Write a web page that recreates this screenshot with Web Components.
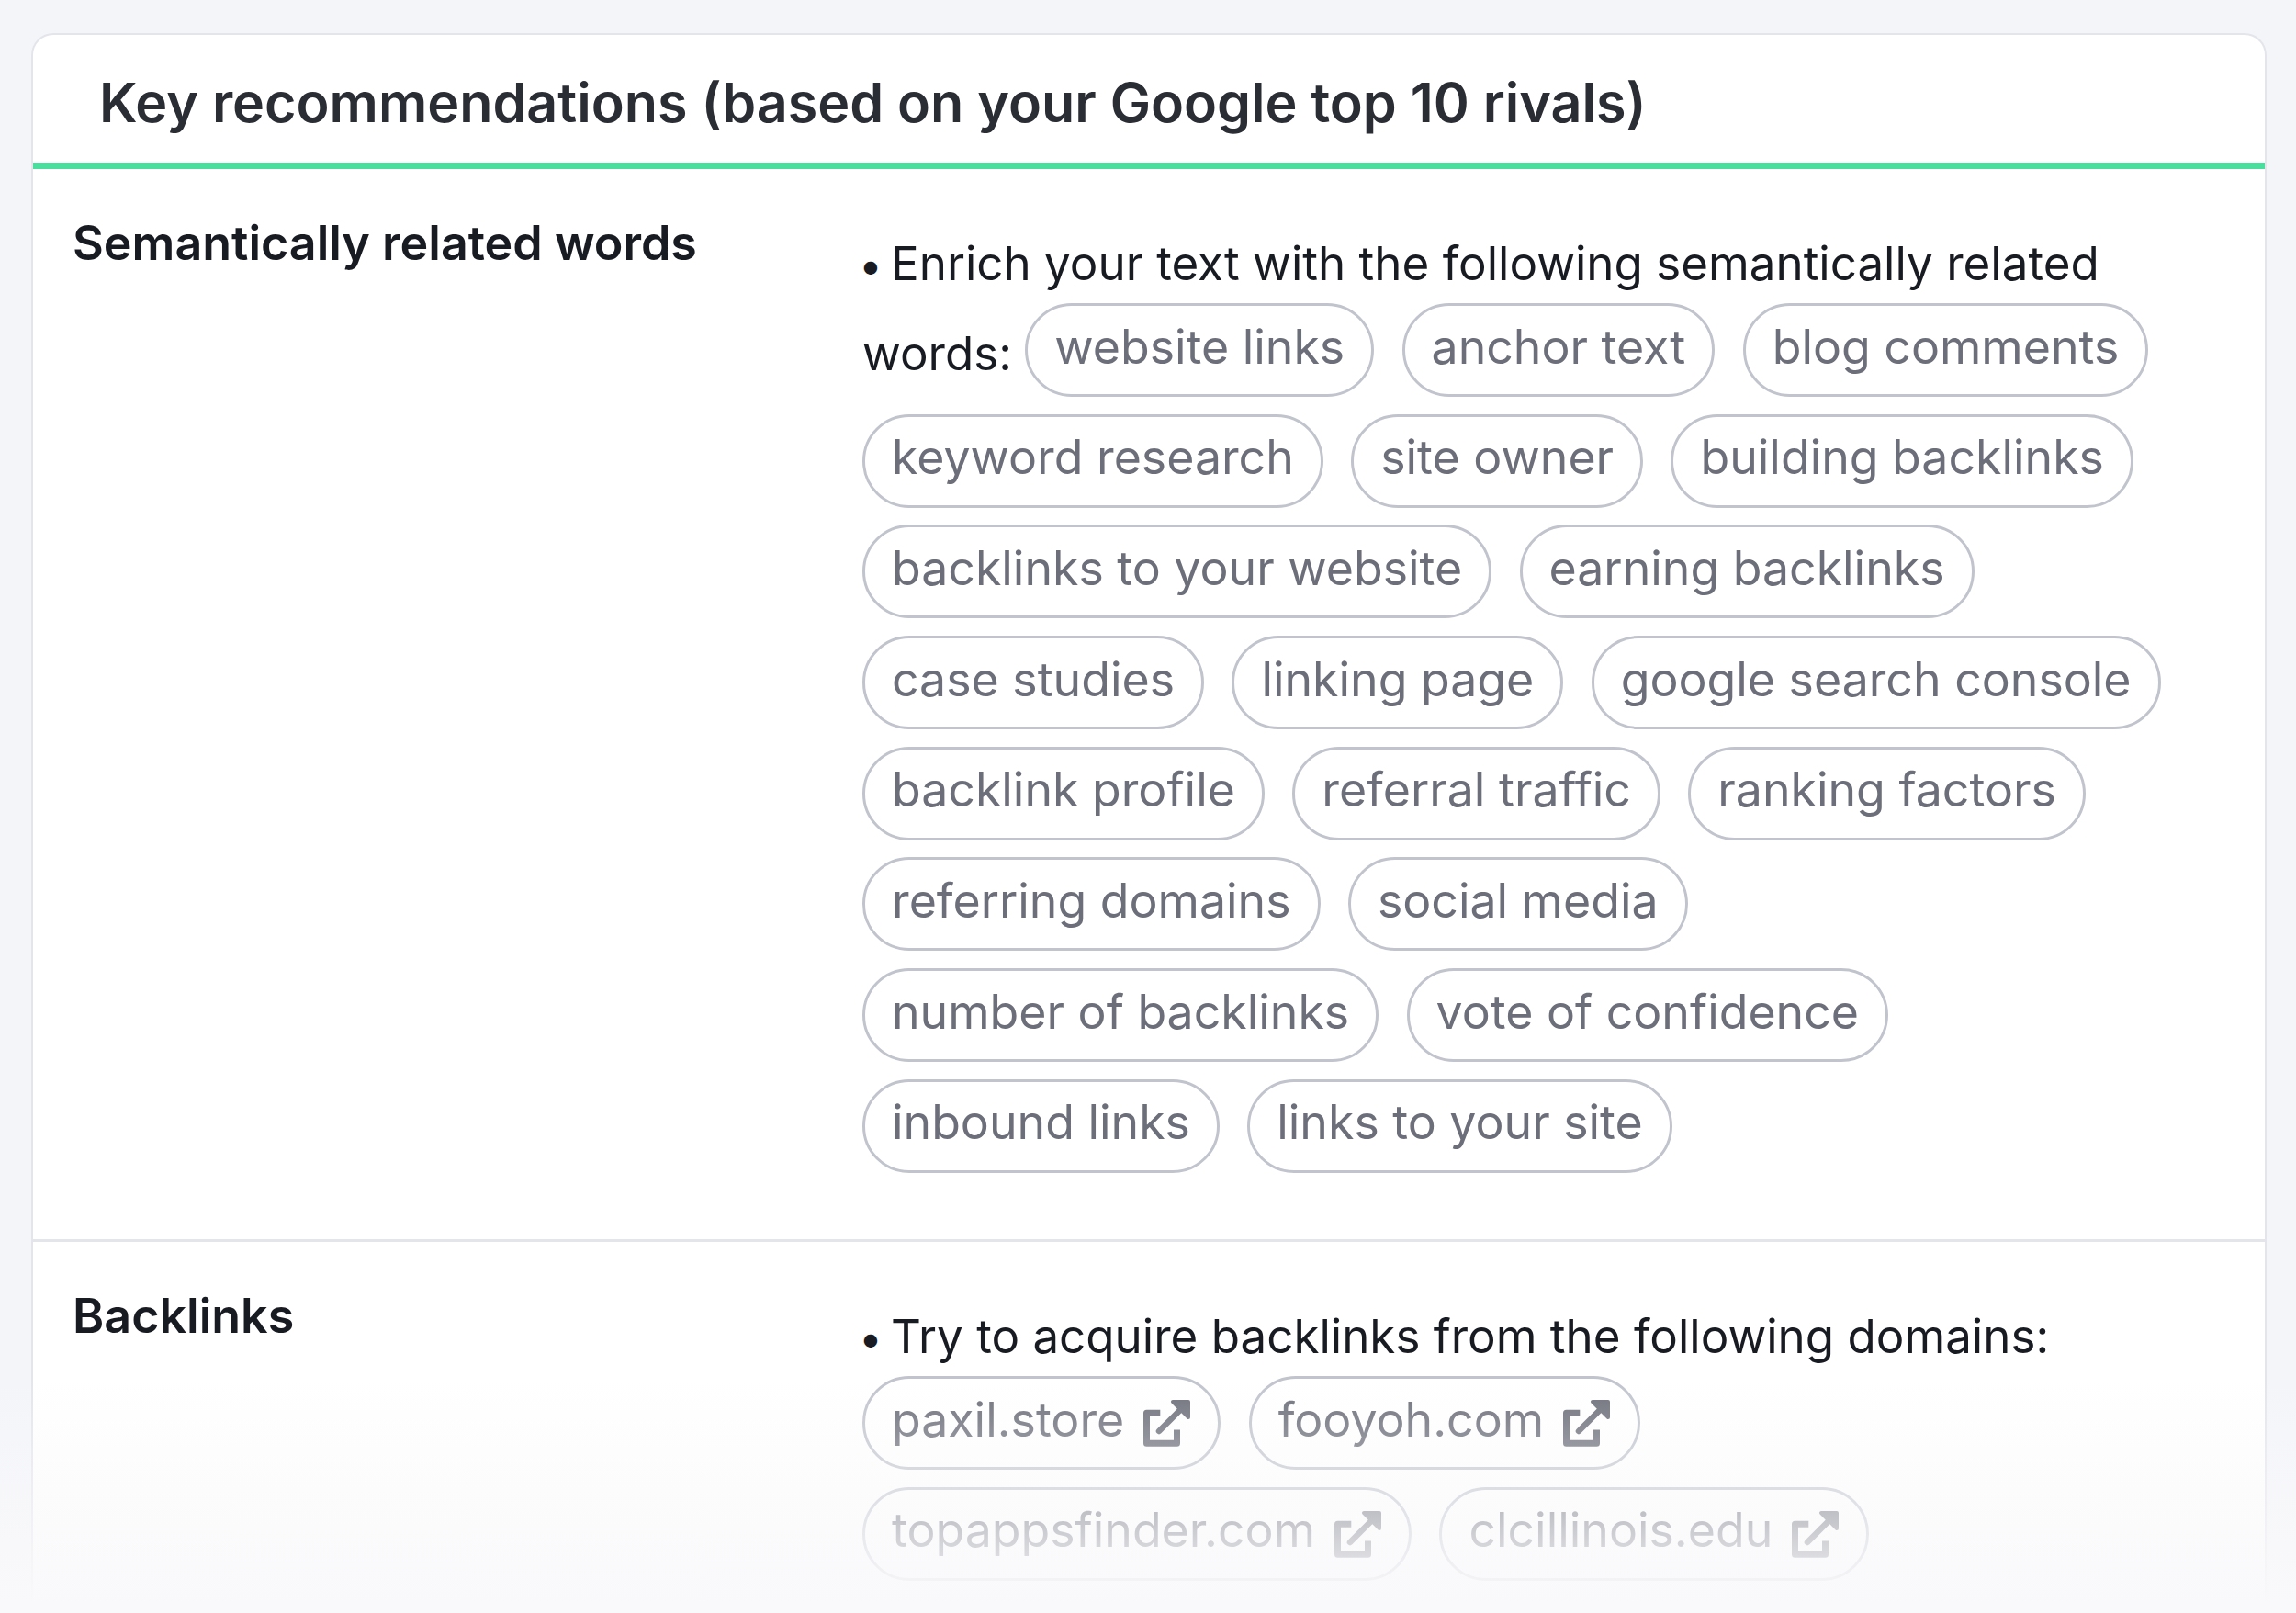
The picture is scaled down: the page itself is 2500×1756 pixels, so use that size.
<!DOCTYPE html>
<html>
<head>
<meta charset="utf-8">
<title>Key recommendations</title>
<style>
  html, body { margin: 0; height: 100%; }
  body { background: #f4f5f9; overflow: hidden; font-family: Inter, "Liberation Sans", sans-serif; }
</style>
</head>
<body>
<seo-card heading="Key recommendations (based on your Google top 10 rivals)">
  <seo-row label="Semantically related words" intro="Enrich your text with the following semantically related words:">
    <seo-pill>website links</seo-pill>
    <seo-pill>anchor text</seo-pill>
    <seo-pill>blog comments</seo-pill>
    <seo-pill>keyword research</seo-pill>
    <seo-pill>site owner</seo-pill>
    <seo-pill>building backlinks</seo-pill>
    <seo-pill>backlinks to your website</seo-pill>
    <seo-pill>earning backlinks</seo-pill>
    <seo-pill>case studies</seo-pill>
    <seo-pill>linking page</seo-pill>
    <seo-pill>google search console</seo-pill>
    <seo-pill>backlink profile</seo-pill>
    <seo-pill>referral traffic</seo-pill>
    <seo-pill>ranking factors</seo-pill>
    <seo-pill>referring domains</seo-pill>
    <seo-pill>social media</seo-pill>
    <seo-pill>number of backlinks</seo-pill>
    <seo-pill>vote of confidence</seo-pill>
    <seo-pill>inbound links</seo-pill>
    <seo-pill>links to your site</seo-pill>
  </seo-row>
  <seo-row label="Backlinks" intro="Try to acquire backlinks from the following domains:" class="second">
    <br>
    <seo-pill external>paxil.store</seo-pill>
    <seo-pill external>fooyoh.com</seo-pill>
    <seo-pill external>topappsfinder.com</seo-pill>
    <seo-pill external>clcillinois.edu</seo-pill>
  </seo-row>
</seo-card>

<script>
class SeoCard extends HTMLElement {
  constructor() {
    super();
    const root = this.attachShadow({mode: 'open'});
    root.innerHTML = `
      <style>
        :host {
          display: block;
          position: relative;
          height: 1756px;
          padding: 36px 32px 0 34px;
          box-sizing: border-box;
          overflow: hidden;
        }
        .card {
          background: #fff;
          border: 2px solid #e4e5eb;
          border-bottom: none;
          border-radius: 24px 24px 0 0;
          height: 1800px;
        }
        h1 {
          margin: 0;
          height: 139px;
          padding-left: 72px;
          border-bottom: 7px solid #4ade9e;
          font: 600 59.2px/147px Inter, sans-serif;
          color: #2b2d35;
        }
        /* the page fades out toward the bottom edge */
        .fade {
          position: absolute;
          left: 0;
          right: 0;
          bottom: 0;
          height: 256px;
          background: linear-gradient(to bottom, rgba(249,249,251,0), rgba(249,249,251,1) 96%);
        }
      </style>
      <div class="card">
        <h1></h1>
        <slot></slot>
      </div>
      <div class="fade"></div>`;
    root.querySelector('h1').textContent = this.getAttribute('heading');
  }
}
customElements.define('seo-card', SeoCard);

class SeoRow extends HTMLElement {
  constructor() {
    super();
    const root = this.attachShadow({mode: 'open'});
    root.innerHTML = `
      <style>
        :host {
          display: grid;
          grid-template-columns: 860px 1fr;
          padding: 0 59px 0 43px;
          border-bottom: 3px solid #e4e5eb;
        }
        :host(.second) { border-bottom: none; }
        .label {
          padding-top: 47px;
          font: 600 52px/67px Inter, sans-serif;
          color: #191b23;
        }
        .body {
          padding: 67px 0 62.5px;
          font: 400 51.1px/70px Inter, sans-serif;
          color: #191b23;
        }
        .dot {
          display: inline-block;
          width: 35px;
          margin-left: -4px;
          font-size: 46px;
          line-height: 1;
        }
      </style>
      <div class="label"></div>
      <div class="body"><span class="dot">•</span><span class="intro"></span> <slot></slot></div>`;
    root.querySelector('.label').textContent = this.getAttribute('label');
    root.querySelector('.intro').textContent = this.getAttribute('intro');
  }
}
customElements.define('seo-row', SeoRow);

class SeoPill extends HTMLElement {
  constructor() {
    super();
    const root = this.attachShadow({mode: 'open'});
    const external = this.hasAttribute('external');
    const icon = external ? `
      <svg viewBox="0 0 52 52" width="52" height="52" fill="none" stroke="currentColor" aria-hidden="true">
        <path d="M19.3 15.2H4.5V48.2H37.5V33.4" stroke-width="7" stroke-linejoin="round"/>
        <path d="M18 35L44 9" stroke-width="6.5" stroke-linecap="round"/>
        <path d="M33 3H50V20Z" fill="currentColor" stroke-width="4" stroke-linejoin="round"/>
      </svg>` : '';
    root.innerHTML = `
      <style>
        :host {
          display: inline-flex;
          align-items: center;
          gap: 20px;
          height: 102px;
          padding: 0 29px 9px;
          margin: 9px 16px 9.7px 0;
          border: 3px solid #c1c4cd;
          border-radius: 51px;
          box-sizing: border-box;
          vertical-align: 7px;
          background: #fff;
          color: #6c6e79;
          font: 400 51.8px/60px Inter, sans-serif;
          white-space: nowrap;
        }
        :host([external]) { padding-right: 30px; }
        svg { flex: none; margin-top: 9px; }
      </style>
      <slot></slot>${icon}`;
  }
}
customElements.define('seo-pill', SeoPill);
</script>
</body>
</html>
